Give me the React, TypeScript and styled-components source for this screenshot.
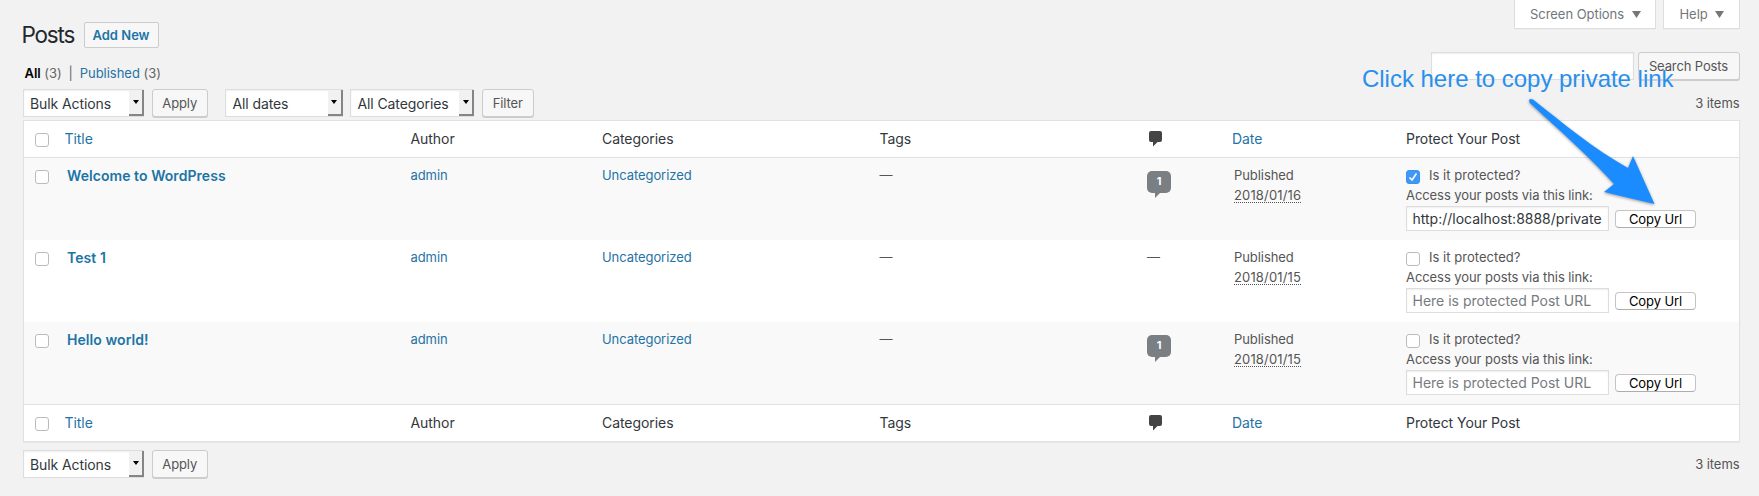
import React from 'react';
import styled, { createGlobalStyle, css } from 'styled-components';

const GlobalStyle = createGlobalStyle`
  * { box-sizing: border-box; }
  body {
    margin: 0;
    background: #f2f2f2;
    color: #555;
    font: 13px/20px Inter, "Liberation Sans", sans-serif;
    letter-spacing: -0.07px;
  }
`;

const Page = styled.main`
  position: relative;
  height: 496px;
  padding: 0 19.5px 0 22.5px;
  overflow: hidden;
`;

const TopArea = styled.header`
  display: flex;
  justify-content: space-between;
  align-items: flex-start;
  height: 52px;
`;

const Heading = styled.div`
  display: flex;
  align-items: flex-start;
  gap: 9.5px;
  padding-top: 22px;
`;

const PageTitle = styled.h1`
  margin: 0 0 0 -1px;
  width: 52.5px;
  font-size: 22.5px;
  line-height: 26px;
  font-weight: 400;
  letter-spacing: -1.2px;
  color: #23282d;
  white-space: nowrap;
`;

const AddNew = styled.a`
  height: 26px;
  padding: 0 8px;
  border: 1px solid #ccc;
  border-radius: 2px;
  background: #f7f7f7;
  color: #1c74a5;
  font-weight: 600;
  line-height: 25px;
  letter-spacing: 0;
`;

const ScreenTabs = styled.div`
  display: flex;
  gap: 7px;
`;

const ScreenTab = styled.button<{ $width: number }>`
  display: flex;
  align-items: center;
  gap: 7.5px;
  width: ${p => p.$width}px;
  height: 29px;
  padding: 0 0 0 15.5px;
  border: 1px solid #ddd;
  border-top: 0;
  background: #fff;
  color: #72777c;
  font: inherit;
  letter-spacing: -0.04px;
  box-shadow: 0 1px 1px -1px rgba(0, 0, 0, 0.1);
`;

const SubHeader = styled.div`
  display: flex;
  justify-content: space-between;
  height: 37px;
`;

const Filters = styled.nav`
  display: flex;
  padding: 11px 0 0 2px;
  white-space: pre;
  color: #666;
  letter-spacing: -0.03px;
`;

const Current = styled.strong`
  color: #000;
  font-weight: 600;
`;

const Divider = styled.span`
  width: 18px;
  text-align: center;
`;

const Link = styled.a`
  color: #1f73a5;
`;

const SearchBox = styled.div`
  display: flex;
  gap: 4px;
`;

const TextField = styled.input`
  width: 203px;
  height: 28px;
  padding: 2px 5.5px;
  border: 1px solid #ddd;
  border-radius: 0;
  background: #fff;
  box-shadow: inset 0 1px 2px rgba(0, 0, 0, 0.07);
  color: #32373c;
  font: 14px/20px Inter, sans-serif;
  letter-spacing: 0;
  &::placeholder { color: #777b80; opacity: 1; }
`;

const UrlField = styled(TextField)`
  height: 25px;
`;

const Button = styled.button<{ $width: number }>`
  width: ${p => p.$width}px;
  height: 28px;
  padding: 0;
  border: 1px solid #ccc;
  border-radius: 3px;
  background: #f7f7f7;
  box-shadow: 0 1px 0 #ccc;
  color: #555;
  font: 13px/26px Inter, sans-serif;
  letter-spacing: -0.12px;
`;

const TableNav = styled.div`
  display: flex;
  align-items: center;
  height: 28px;
`;

const Group = styled.div`
  display: flex;
  gap: 7.5px;
  margin-right: 17px;
`;

const ItemCount = styled.span`
  margin-left: auto;
`;

const SelectBox = styled.div<{ $width: number }>`
  display: flex;
  justify-content: space-between;
  width: ${p => p.$width}px;
  height: 28px;
  padding-left: 6.5px;
  border: 1px solid #ddd;
  background: #fff;
  box-shadow: inset 0 1px 2px rgba(0, 0, 0, 0.07);
  color: #32373c;
  font-size: 14px;
  line-height: 28px;
  letter-spacing: -0.1px;
`;

const SelectArrow = styled.span`
  display: flex;
  justify-content: center;
  align-items: center;
  width: 15px;
  height: 26px;
  margin-right: -1px;
  border: solid #858585;
  border-width: 0 2px 2px 0;
  background: #f1f1f1;
`;

const Table = styled.section`
  margin-top: 3px;
  width: 1717px;
  height: 322px;
  border: 1px solid #e1e1e1;
  background: #fff;
  box-shadow: 0 1px 1px rgba(0, 0, 0, 0.04);
`;

const columns = css`
  display: grid;
  grid-template-columns: 29.5px 346px 191.5px 277.5px 267.5px 85px 174px 1fr;
  padding-left: 11.5px;
`;

const LabelRow = styled.div<{ $foot?: boolean }>`
  ${columns}
  align-items: center;
  height: ${p => (p.$foot ? 36 : 37)}px;
  border: 0 solid #e1e1e1;
  border-width: ${p => (p.$foot ? '1px 0 0' : '0 0 1px')};
  color: #32373c;
  font-size: 14px;
  letter-spacing: -0.06px;
`;

const PostRow = styled.article<{ $shaded: boolean }>`
  ${columns}
  align-items: start;
  height: 82px;
  padding-top: 7px;
  background: ${p => (p.$shaded ? '#f9f9f9' : '#fff')};
`;

const Check = styled.span<{ $on?: boolean }>`
  display: flex;
  align-items: center;
  justify-content: center;
  width: 14px;
  height: 14px;
  border: 1px solid ${p => (p.$on ? '#3b93f2' : '#b9bcbe')};
  border-radius: 3px;
  background: ${p => (p.$on ? '#3f98f5' : '#fff')};
`;

const RowCheck = styled(Check)`
  margin-top: 5px;
`;

const HeadCheck = styled(Check)`
  margin-top: 2px;
`;

const PostTitle = styled.a`
  padding: 0.5px 0 0 2.5px;
  color: #1c74a5;
  font-size: 14px;
  font-weight: 600;
  letter-spacing: 0.06px;
`;

const Dash = styled.span`
  letter-spacing: 0;
`;

const CommentBadge = styled.span`
  display: flex;
  justify-content: center;
  position: relative;
  width: 24px;
  height: 22px;
  margin-top: 6px;
  border-radius: 5px;
  background: #7a7f84;
  color: #fff;
  font-size: 11px;
  font-weight: 700;
  line-height: 21px;
  &::after {
    content: '';
    position: absolute;
    left: 8px;
    top: 22px;
    border-right: 5px solid transparent;
    border-top: 5px solid #7a7f84;
  }
`;

const DateCell = styled.div`
  display: grid;
  justify-items: start;
  padding-left: 2px;
`;

const DateText = styled.span`
  height: 18px;
  border-bottom: 1px dotted #555;
  letter-spacing: 0.15px;
`;

const Protect = styled.div`
  display: grid;
`;

const ProtectLine = styled.label`
  display: flex;
  gap: 9px;
  letter-spacing: 0.03px;
`;

const CopyLine = styled.div`
  display: flex;
  align-items: center;
  gap: 6px;
  margin-top: 1px;
`;

const CopyButton = styled.button`
  width: 81px;
  height: 18px;
  padding: 0;
  border: 1px solid #c4c4c4;
  border-bottom-color: #adadad;
  border-radius: 4px;
  background: #fff;
  color: #000;
  font: 13px/16px Inter, sans-serif;
  letter-spacing: -0.1px;
`;

const BottomNav = styled(TableNav)`
  margin-top: 8px;
`;

const Annotation = styled.p`
  position: absolute;
  left: 1362px;
  top: 64px;
  margin: 0;
  color: #2a8feb;
  font: 24px/30px "Liberation Sans", sans-serif;
  letter-spacing: -0.02px;
  white-space: nowrap;
  text-shadow: 0 0 2px #f2f2f2;
`;

const Pointer = styled.svg`
  position: absolute;
  left: 1520px;
  top: 92px;
  filter: drop-shadow(0 1px 1.5px rgba(0, 0, 0, 0.4));
`;

const Tri = () => (
  <svg width="9" height="7" viewBox="0 0 10 8" preserveAspectRatio="none">
    <path d="M0 0H10L5 8Z" fill="currentColor" />
  </svg>
);

const Select = ({ label, width }: { label: string; width: number }) => (
  <SelectBox $width={width}>
    {label}
    <SelectArrow><svg width="6" height="4"><path d="M0 0H6L3 4Z" fill="#000" /></svg></SelectArrow>
  </SelectBox>
);

const BulkActions = () => (
  <Group>
    <Select label="Bulk Actions" width={121.5} />
    <Button $width={56.5}>Apply</Button>
  </Group>
);

const Labels = ({ foot }: { foot?: boolean }) => (
  <LabelRow $foot={foot}>
    <HeadCheck />
    <Link>Title</Link>
    <span>Author</span>
    <span>Categories</span>
    <span>Tags</span>
    <svg width="17" height="16" viewBox="0 0 17 16">
      <path d="M4 0H13Q15 0 15 2V9Q15 11 13 11H10.5L6 15.5V11H4Q2 11 2 9V2Q2 0 4 0Z" fill="#444" />
    </svg>
    <Link>Date</Link>
    <span>Protect Your Post</span>
  </LabelRow>
);

const posts = [
  { title: 'Welcome to WordPress', comments: 1, date: '2018/01/16', url: 'http://localhost:8888/private' },
  { title: 'Test 1', comments: 0, date: '2018/01/15', url: '' },
  { title: 'Hello world!', comments: 1, date: '2018/01/15', url: '' },
];

export default function App() {
  return (
    <Page>
      <GlobalStyle />
      <TopArea>
        <Heading>
          <PageTitle>Posts</PageTitle>
          <AddNew>Add New</AddNew>
        </Heading>
        <ScreenTabs>
          <ScreenTab $width={142.5}>Screen Options <Tri /></ScreenTab>
          <ScreenTab $width={76.5}>Help <Tri /></ScreenTab>
        </ScreenTabs>
      </TopArea>
      <SubHeader>
        <Filters>
          <Current>All</Current> (3)<Divider>|</Divider><Link>Published</Link> (3)
        </Filters>
        <SearchBox>
          <TextField aria-label="Search" />
          <Button $width={102}>Search Posts</Button>
        </SearchBox>
      </SubHeader>
      <TableNav>
        <BulkActions />
        <Group>
          <Select label="All dates" width={117.5} />
          <Select label="All Categories" width={124} />
          <Button $width={52.5}>Filter</Button>
        </Group>
        <ItemCount>3 items</ItemCount>
      </TableNav>
      <Table>
        <Labels />
        {posts.map((post, i) => (
          <PostRow key={post.title} $shaded={i % 2 === 0}>
            <RowCheck />
            <PostTitle>{post.title}</PostTitle>
            <Link>admin</Link>
            <Link>Uncategorized</Link>
            <Dash>—</Dash>
            {post.comments ? <CommentBadge>{post.comments}</CommentBadge> : <Dash>—</Dash>}
            <DateCell>
              <span>Published</span>
              <DateText>{post.date}</DateText>
            </DateCell>
            <Protect>
              <ProtectLine>
                <RowCheck $on={!!post.url}>
                  {post.url && (
                    <svg width="10" height="10" viewBox="0 0 10 10">
                      <path d="M1.5 5.5L4 8L8.5 1.5" fill="none" stroke="#fff" strokeWidth="1.6" />
                    </svg>
                  )}
                </RowCheck>
                Is it protected?
              </ProtectLine>
              <span>Access your posts via this link:</span>
              <CopyLine>
                <UrlField defaultValue={post.url} placeholder="Here is protected Post URL" />
                <CopyButton>Copy Url</CopyButton>
              </CopyLine>
            </Protect>
          </PostRow>
        ))}
        <Labels foot />
      </Table>
      <BottomNav>
        <BulkActions />
        <ItemCount>3 items</ItemCount>
      </BottomNav>
      <Annotation>Click here to copy private link</Annotation>
      <Pointer width="150" height="125" viewBox="0 0 150 125">
        <path d="M9 9Q9 6 13 7.5C44 32 74 57 108 76L113 64L134.500 112L84 100L94 92C70 65 40 39 10 11Z" fill="#1a8cff" />
      </Pointer>
    </Page>
  );
}
